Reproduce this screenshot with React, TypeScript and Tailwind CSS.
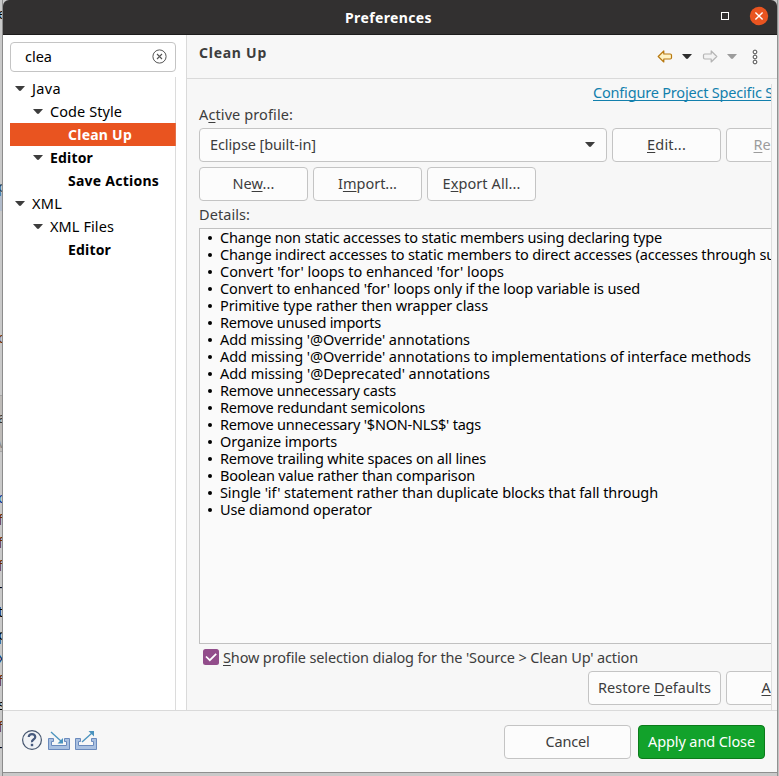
import React, { useLayoutEffect, useRef } from "react";

const FONT = "font-['Noto_Sans','Open_Sans',sans-serif]";

/** Text run whose tracking is adjusted so that it fills exactly `w` pixels. */
function Fit({ w, children, className = "" }: { w: number; children: React.ReactNode; className?: string }) {
  const ref = useRef<HTMLSpanElement>(null);
  useLayoutEffect(() => {
    const el = ref.current;
    if (!el) return;
    el.style.letterSpacing = "0px";
    const natural = el.getBoundingClientRect().width;
    const count = (el.textContent || "").length;
    el.style.letterSpacing = (w - natural) / count + "px";
  }, [w]);
  return (
    <span ref={ref} className={"inline-block whitespace-pre " + className}>
      {children}
    </span>
  );
}

function U({ children }: { children: React.ReactNode }) {
  return <span className="underline decoration-1 underline-offset-2">{children}</span>;
}

function Caret({ className = "text-[#3d3d3d]" }: { className?: string }) {
  return (
    <svg width="10" height="5" viewBox="0 0 10 5" className={"shrink-0 " + className}>
      <path d="M0 0H10L6 4.6Q5 5.4 4 4.6Z" fill="currentColor" />
    </svg>
  );
}

const tree = [
  { label: "Java", w: 29, depth: 0, open: true },
  { label: "Code Style", w: 72, depth: 1, open: true },
  { label: "Clean Up", w: 64, depth: 2, bold: true, selected: true },
  { label: "Editor", w: 43, depth: 1, open: true, bold: true },
  { label: "Save Actions", w: 91, depth: 2, bold: true },
  { label: "XML", w: 30, depth: 0, open: true },
  { label: "XML Files", w: 64, depth: 1, open: true },
  { label: "Editor", w: 43, depth: 2, bold: true },
];
const indents = ["pl-[5px]", "pl-[23px]", "pl-[41px]"];

function Tree() {
  return (
    <div className="mt-[5px] ml-[7px] w-[166px] flex-1 border-r border-[#dcdcdc]">
      {tree.map((n, i) => (
        <div
          key={i}
          className={
            "flex h-[23px] items-center " +
            indents[n.depth] +
            (n.selected ? " -mr-px border-r border-[#e2714a] bg-[#e95420] text-white" : " text-black") +
            (n.bold ? " font-bold" : "")
          }
        >
          <span className="flex w-[17px] shrink-0">{n.open && <Caret />}</span>
          <Fit w={n.w} className={n.bold ? "text-[14px]" : ""}>{n.label}</Fit>
        </div>
      ))}
    </div>
  );
}

const details: [string, number][] = [
  ["Change non static accesses to static members using declaring type", 442],
  ["Change indirect accesses to static members to direct accesses (accesses through subtypes)", 604],
  ["Convert 'for' loops to enhanced 'for' loops", 284],
  ["Convert to enhanced 'for' loops only if the loop variable is used", 420],
  ["Primitive type rather then wrapper class", 268],
  ["Remove unused imports", 161],
  ["Add missing '@Override' annotations", 250],
  ["Add missing '@Override' annotations to implementations of interface methods", 531],
  ["Add missing '@Deprecated' annotations", 270],
  ["Remove unnecessary casts", 176],
  ["Remove redundant semicolons", 205],
  ["Remove unnecessary '$NON-NLS$' tags", 261],
  ["Organize imports", 117],
  ["Remove trailing white spaces on all lines", 266],
  ["Boolean value rather than comparison", 255],
  ["Single 'if' statement rather than duplicate blocks that fall through", 438],
  ["Use diamond operator", 152],
];

function Button({
  className = "",
  tone = "border-[#c4c4c4] bg-[#fcfcfc]",
  children,
}: {
  className?: string;
  tone?: string;
  children: React.ReactNode;
}) {
  return (
    <div className={"flex h-[34px] shrink-0 items-center justify-center rounded-[4px] border pb-px " + tone + " " + className}>
      {children}
    </div>
  );
}

const slivers: [string, number, string][] = [
  ["e", 5, "text-black"], ["p", 178, "text-[#2b3c55]"],
  ["o", 329, "text-[#6b2a00]"], ["a", 409, "text-[#333]"], ["v", 434, "text-[#888]"],
  ["o", 489, "text-[#003399]"], ["f", 511, "text-[#6b2a00]"], ["f", 534, "text-[#6b2a00]"],
  ["f", 557, "text-[#6b2a00]"], ["-", 578, "text-black"], ["t", 603, "text-black"],
  ["p", 626, "text-black"], ["x", 649, "text-[#003377]"], ["f", 672, "text-[#6b2a00]"],
  ["s", 696, "text-black"], ["f", 718, "text-[#6b2a00]"], ["-", 738, "text-black"],
];

/** Editor window that is almost fully hidden by the dialog. */
function BehindLeft() {
  return (
    <div className="relative h-[776px] w-[3px] shrink-0 overflow-hidden border-r border-[#8c8c8c] bg-[#c9c9c9]">
      <div className="absolute top-[193px] h-[18px] w-full bg-[#b2bccb]" />
      <div className="absolute top-[395px] h-[57px] w-full border-y border-[#a5a5a5] bg-[#bebbb8]" />
      {slivers.map(([ch, y, c], i) => (
        <span key={i} style={{ top: y }} className={"absolute -left-[2px] text-[14px] leading-[18px] " + c}>
          {ch}
        </span>
      ))}
    </div>
  );
}

function TitleBar() {
  return (
    <div className="flex h-[35px] shrink-0 items-center rounded-t-[6px] border-b border-[#1d1c1c] bg-[#323030] pr-[8px] text-white">
      <div className="flex flex-1 pl-[342px] font-bold">
        <Fit w={87} className="text-[14px]">Preferences</Fit>
      </div>
      <span className="mb-[2px] mr-[20px] h-[8px] w-[8px] border border-white" />
      <svg width="20" height="20" viewBox="0 0 20 20" className="mb-[3px]">
        <circle cx="10" cy="10" r="9.2" fill="#e95420" />
        <path d="M6.4 6.4 13.6 13.6M13.6 6.4 6.4 13.6" stroke="#fff" strokeWidth="1.4" />
      </svg>
    </div>
  );
}

function Arrow({ back = false }: { back?: boolean }) {
  return (
    <svg width="16" height="13" viewBox="0 0 16 13" className={back ? "" : "-scale-x-100"}>
      <path
        d="M1.2 6.5 6.8 1V4H13.2Q14.5 4 14.5 5.2V7.8Q14.5 9 13.2 9H6.8V12Z"
        fill={back ? "#fff3c4" : "#f3f3f3"}
        stroke={back ? "#b87910" : "#b5b5b5"}
        strokeWidth="1.2"
        strokeLinejoin="round"
      />
    </svg>
  );
}

export default function App() {
  return (
    <div className={"flex h-[776px] w-[779px] overflow-hidden bg-[#c9c9c9] text-[14.5px] leading-[17px] text-[#3d3d3d] " + FONT}>
      <BehindLeft />
      <div className="flex h-[776px] w-[774px] shrink-0 flex-col">
        <TitleBar />
        <div className="flex h-[675px] shrink-0">
          <div className="flex w-[183px] shrink-0 flex-col bg-white">
            <div className="mt-[7px] ml-[7px] flex h-[30px] w-[166px] items-center rounded-[4px] border border-[#c4c4c4] pr-[8px] pb-px pl-[14px] text-black">
              <div className="flex flex-1"><Fit w={27}>clea</Fit></div>
              <svg width="15" height="15" viewBox="0 0 15 15" fill="none" stroke="#555">
                <circle cx="7.5" cy="7.5" r="6.6" />
                <path d="M5 5 10 10M10 5 5 10" strokeWidth="1.1" />
              </svg>
            </div>
            <Tree />
          </div>
          <div className="flex min-w-0 flex-1 flex-col border-l border-[#dadada] bg-[#f7f7f7]">
            <div className="flex h-[44px] shrink-0 items-center border-b border-[#dadada] pl-[12px]">
              <div className="mb-[8px] w-[458px] font-bold"><Fit w={68} className="text-[14px]">Clean Up</Fit></div>
              <Arrow back />
              <Caret className="ml-[9px] text-[#2e2e2e]" />
              <span className="ml-[10px] flex"><Arrow /></span>
              <Caret className="ml-[9px] text-[#9c9c9c]" />
              <svg width="6" height="16" viewBox="0 0 6 16" className="ml-[15px]" fill="#fff" stroke="#4a4a4a">
                <circle cx="3" cy="3" r="1.9" /><circle cx="3" cy="8" r="1.9" /><circle cx="3" cy="13" r="1.9" />
              </svg>
            </div>
            <div className="mt-[5px] flex min-h-0 flex-1">
              <div className="flex w-[585px] shrink-0 flex-col overflow-hidden pl-[12px]">
                <div className="ml-[394px] flex h-[18px] shrink-0 text-[#1280ad]">
                  <Fit w={237} className="h-[17px] border-b border-[#1280ad]">Configure Project Specific Settings...</Fit>
                </div>
                <div className="mt-[4px] h-[22px] shrink-0"><Fit w={94}>A<U>c</U>tive profile:</Fit></div>
                <div className="flex shrink-0 gap-[5px]">
                  <Button className="w-[408px]">
                    <span className="flex flex-1 pl-[10px]"><Fit w={106}>Eclipse [built-in]</Fit></span>
                    <Caret className="mr-[11px]" />
                  </Button>
                  <Button className="w-[109px]"><Fit w={39}><U>E</U>dit...</Fit></Button>
                  <Button className="w-[109px] text-[#9c9c9c]"><Fit w={54}><U>R</U>emove</Fit></Button>
                </div>
                <div className="mt-[5px] flex shrink-0 gap-[5px]">
                  <Button className="w-[109px]"><Fit w={42}>Ne<U>w</U>...</Fit></Button>
                  <Button className="w-[109px]"><Fit w={59}>I<U>m</U>port...</Fit></Button>
                  <Button className="w-[109px]"><Fit w={78}>E<U>x</U>port All...</Fit></Button>
                </div>
                <div className="mt-[5px] h-[22px] shrink-0"><Fit w={51}>Details:</Fit></div>
                <ul className="h-[416px] w-[600px] shrink-0 border border-[#c0c0c0] bg-[#fafafa] text-black">
                  {details.map(([t, w]) => (
                    <li key={t} className="flex h-[17px] items-center">
                      <span className="mt-px mr-[8px] ml-[8px] h-[4px] w-[4px] shrink-0 rounded-full bg-black" />
                      <Fit w={w}>{t}</Fit>
                    </li>
                  ))}
                </ul>
                <div className="mt-[5px] ml-[4px] flex h-[17px] shrink-0 items-center">
                  <svg width="16" height="16" viewBox="0 0 16 16" className="mr-[4px] mb-px">
                    <rect width="16" height="16" rx="2.5" fill="#924d8b" />
                    <path d="M3 7.5 6.8 11.2 13.2 4.8" fill="none" stroke="#fff" strokeWidth="1.7" />
                  </svg>
                  <Fit w={415}><U>S</U>how profile selection dialog for the 'Source &gt; Clean Up' action</Fit>
                </div>
                <div className="mt-[5px] ml-[389px] flex shrink-0 gap-[5px]">
                  <Button className="w-[133px]"><Fit w={113}>Restore <U>D</U>efaults</Fit></Button>
                  <Button className="w-[109px]"><Fit w={38}><U>A</U>pply</Fit></Button>
                </div>
              </div>
              <div className="-ml-px w-[5px] border-l border-[#dedede] bg-[#f7f7f7]" />
            </div>
          </div>
        </div>
        <div className="flex h-[63px] shrink-0 items-center border-t border-b border-t-[#dadada] border-b-[#8f8f8f] bg-[#f7f7f7] pr-[12px] pl-[18px]">
          <svg width="76" height="22" viewBox="0 0 76 22" className="mb-[3px]">
            <circle cx="11" cy="11" r="9.4" fill="#f1f3f6" stroke="#46566f" strokeWidth="1.2" />
            <path d="M7.7 8Q8 5.2 11 5.2T14.3 8Q14.3 9.3 12.5 10.5T11 13.2" fill="none" stroke="#46597d" strokeWidth="2.2" />
            <rect x="9.800" y="14.8" width="2.4" height="2.4" fill="#46597d" />
            <g fill="#a9c0e0" stroke="#6a8abd">
              <path d="M27.5 9.5H32.5V12.5H30.5V16.5H45.5V12.5H43.5V9.5H48.5V20.5H27.5Z" />
              <path d="M54.5 9.5H59.5V12.5H57.5V16.5H72.5V12.5H70.5V9.5H75.5V20.5H54.5Z" />
            </g>
            <g fill="none" stroke="#4b93be" strokeWidth="1.3">
              <path d="M30 3 41 13" /><path d="M61 13 71 4" />
            </g>
            <path d="M42 9V14.500H36.500Z" fill="#4b93be" />
            <path d="M67.500 2H73V7.500Z" fill="#4b93be" />
          </svg>
          <div className="ml-auto flex gap-[7px]">
            <Button className="w-[127px]"><Fit w={44}>Cancel</Fit></Button>
            <Button className="w-[127px] text-white" tone="border-[#0b7b1a] bg-[#12a22b]"><Fit w={107}>Apply and Close</Fit></Button>
          </div>
        </div>
      </div>
      <div className="h-[776px] w-[2px] shrink-0 border-l border-[#929292] bg-[#c3c3c3]" />
    </div>
  );
}
